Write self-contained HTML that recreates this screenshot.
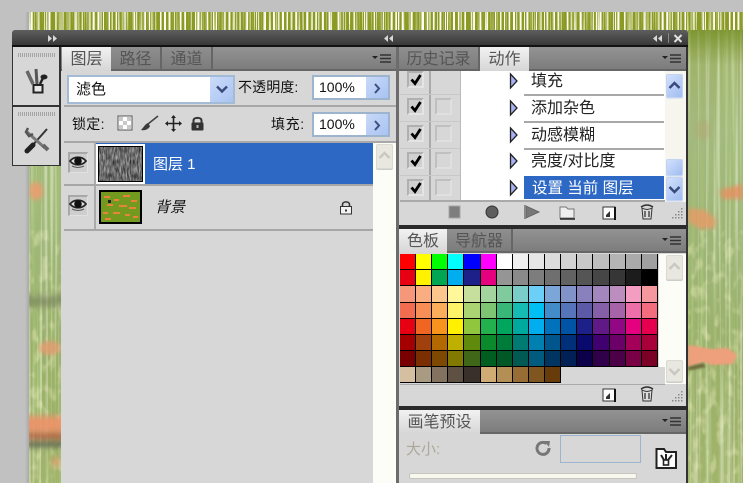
<!DOCTYPE html>
<html><head><meta charset="utf-8"><style>
*{box-sizing:border-box}
html,body{margin:0;padding:0}
body{width:743px;height:483px;overflow:hidden;position:relative;background:#c1c1c1;font-family:"Liberation Sans","Noto Sans CJK SC",sans-serif;font-size:14px;color:#111}
.a{position:absolute}
.t{position:absolute;white-space:nowrap;line-height:1}
.tabbar{position:absolute;background:linear-gradient(#939393,#7d7d7d);border-bottom:2px solid #666}
.tab{position:absolute;top:0;height:22px;text-align:center;font-size:16px;line-height:25px;color:#5c5c5c}
.tab.on{background:linear-gradient(#f2f2f2,#d6d6d6);color:#555;height:24px;z-index:2}
.tab.off{background:linear-gradient(#8f8f8f,#7c7c7c);border-right:2px solid #666;color:#555;height:22px}
.menu{position:absolute;width:20px;height:11px}
.inp{position:absolute;background:#fff;border:2px solid #9db4cf;font-size:14px;line-height:21px;padding-left:5px;color:#111}
.inp i{position:absolute;right:0;top:0;bottom:0;width:22px;background:linear-gradient(135deg,#c9d9f8,#a8c3f2)}
.inp svg{position:absolute;right:7px;top:6px}
.eye{position:absolute;left:68px;width:20px;height:21px;background:#cecece;border-left:2px solid #a8a8a8;border-top:2px solid #a8a8a8;border-right:1px solid #e0e0e0;border-bottom:1px solid #e0e0e0}
.cb{position:absolute;width:17px;height:17px;border:2px solid #b0b0b0;border-right-color:#e4e4e4;border-bottom-color:#e4e4e4;background:#d0d0d0}
.cb2{position:absolute;width:17px;height:17px;border:2px solid #c0c0c0;border-right-color:#e0e0e0;border-bottom-color:#e0e0e0;left:435px}
.act{position:absolute;left:531px;font-size:16px;line-height:1;white-space:nowrap;color:#222}
.ln{position:absolute;left:524px;width:140px;height:2px;background:#a8a8a8}
.sbb{position:absolute;width:17px;height:24px;border-radius:2px;background:linear-gradient(135deg,#d3e0fb,#9fbdf2);border:1px solid #c3d3f2;box-shadow:0 1px 0 #dfe6f0}
.sbg{position:absolute;width:17px;height:24px;border-radius:2px;background:#e8e8e0;border:1px solid #dadad2;box-shadow:0 1px 0 #ccc}
.sw{position:absolute;left:400px;top:254px;width:258px;height:130px}
.sw div{display:flex;height:16px;background:#000}
.sw div.r17{height:17px}
.sw div.last{background:none}
.sw b{display:block;flex:none;width:16px;height:100%;border-right:1px solid #000;border-bottom:1px solid #000}
.sw b:nth-child(5),.sw b:nth-child(13){width:17px}
</style></head><body>

<!-- photo background -->
<svg class="a" style="left:0;top:0" width="743" height="483">
<defs>
<clipPath id="photo"><rect x="29" y="12" width="714" height="471"/></clipPath>
<linearGradient id="bg" x1="0" y1="0" x2="0" y2="1">
<stop offset="0" stop-color="#8fa23a"/><stop offset=".08" stop-color="#a0b268"/><stop offset=".25" stop-color="#a4b97f"/><stop offset=".5" stop-color="#9db476"/><stop offset=".75" stop-color="#9ab068"/><stop offset="1" stop-color="#a2b36c"/>
</linearGradient>
<linearGradient id="edge" x1="0" y1="0" x2="1" y2="0"><stop offset="0" stop-color="#c1c1c1"/><stop offset="1" stop-color="#a9a9a9"/></linearGradient>
<filter id="b3"><feGaussianBlur stdDeviation="3"/></filter>
<filter id="b2"><feGaussianBlur stdDeviation="2"/></filter>
<filter id="b1"><feGaussianBlur stdDeviation="1"/></filter>
<filter id="streakW" x="0" y="0" width="100%" height="100%"><feTurbulence type="fractalNoise" baseFrequency="0.35 0.003" numOctaves="2" seed="7"/><feColorMatrix values="0 0 0 0 1  0 0 0 0 1  0 0 0 0 .93  5 0 0 0 -2.500"/></filter>
<filter id="streakG" x="0" y="0" width="100%" height="100%"><feTurbulence type="fractalNoise" baseFrequency="0.22 0.004" numOctaves="2" seed="21"/><feColorMatrix values="0 0 0 0 .38  0 0 0 0 .55  0 0 0 0 .18  5 0 0 0 -2.300"/></filter>
<filter id="speck" x="0" y="0" width="100%" height="100%"><feTurbulence type="fractalNoise" baseFrequency="0.12 0.07" numOctaves="2" seed="4"/><feColorMatrix values="0 0 0 0 .85  0 0 0 0 .85  0 0 0 0 .5  4 0 0 0 -2"/></filter>
<filter id="stripTop" x="0" y="0" width="100%" height="100%"><feTurbulence type="fractalNoise" baseFrequency="0.45 0.002" numOctaves="2" seed="12"/><feColorMatrix values="0 0 0 0 1  0 0 0 0 1  0 0 0 0 .92  9 0 0 0 -4.300"/></filter>
<filter id="noiseGray" x="0" y="0" width="100%" height="100%" color-interpolation-filters="sRGB"><feTurbulence type="fractalNoise" baseFrequency="0.7 0.15" numOctaves="2" seed="3"/><feColorMatrix values=".8 0 0 0 .02  .8 0 0 0 .02  .8 0 0 0 .02  0 0 0 0 1"/></filter>
<linearGradient id="fade" x1="0" y1="0" x2="0" y2="1"><stop offset="0" stop-color="#76902a" stop-opacity=".75"/><stop offset="1" stop-color="#76902a" stop-opacity="0"/></linearGradient>
</defs>
<rect x="25" y="12" width="4" height="471" fill="url(#edge)"/>
<rect x="29" y="12" width="714" height="471" fill="url(#bg)"/>
<rect x="29" y="12" width="714" height="471" filter="url(#streakG)" opacity=".6"/>
<rect x="29" y="230" width="714" height="253" filter="url(#speck)" opacity=".4"/>
<rect x="29" y="12" width="714" height="471" filter="url(#streakW)" opacity=".38"/>
<g clip-path="url(#photo)">
<g filter="url(#b2)">
<path d="M688 208L705 210L716 219L715 228L700 229L688 222Z" fill="#e89a66" opacity=".8"/>
<path d="M720 190L743 184V199L722 199Z" fill="#e88d5f" opacity=".8"/>
<ellipse cx="703" cy="130" rx="8" ry="10" fill="#b5a36f" opacity=".4"/>
<ellipse cx="36" cy="191" rx="7" ry="9" fill="#ea9d70" opacity=".9"/>
<ellipse cx="50" cy="348" rx="11" ry="7" fill="#e79a70" opacity=".8"/>
</g>
<g filter="url(#b3)">
<rect x="20" y="416" width="48" height="16" fill="#ea9468" opacity=".95"/>
<rect x="20" y="433" width="48" height="6" fill="#b4563f" opacity=".9"/>
<rect x="20" y="442" width="48" height="5" fill="#4f5548" opacity=".9"/>
<rect x="20" y="295" width="48" height="12" fill="#77805c" opacity=".6"/>
<ellipse cx="56" cy="462" rx="4" ry="5" fill="#e59565" opacity=".8"/>
</g>
<path d="M688 345L712 349L728 348L737 355L733 364L712 365L703 362L692 366L688 367Z" fill="#ee9f7c" filter="url(#b1)"/>
<path d="M688 367L703 363L706 367L692 370L688 370Z" fill="#6e6a3c" filter="url(#b1)"/>
</g>
<!-- top strip -->
<rect x="29" y="12" width="714" height="18" fill="#8b9a24"/>
<rect x="29" y="12" width="714" height="18" filter="url(#stripTop)"/>
<rect x="688" y="30" width="55" height="35" fill="url(#fade)"/>
</svg>

<!-- title bar -->
<div class="a" style="left:12px;top:30px;width:676px;height:17px;background:linear-gradient(#5e5e5e,#383838);border-bottom:2px solid #111;border-radius:3px 3px 0 0"></div>
<svg class="a" style="left:47px;top:34px" width="12" height="9"><path d="M1 1L5 4.500L1 8ZM6 1L10 4.500L6 8Z" fill="#d8d8d8"/></svg>
<svg class="a" style="left:383px;top:34px" width="12" height="9"><path d="M5 1L1 4.500L5 8ZM10 1L6 4.500L10 8Z" fill="#d8d8d8"/></svg>
<svg class="a" style="left:652px;top:34px" width="12" height="9"><path d="M5 1L1 4.500L5 8ZM10 1L6 4.500L10 8Z" fill="#d8d8d8"/></svg>
<div class="a" style="left:668px;top:33px;width:1px;height:10px;background:#888"></div>
<svg class="a" style="left:673px;top:34px" width="10" height="9"><path d="M1.500 1L8.500 8M8.500 1L1.500 8" stroke="#e0e0e0" stroke-width="2"/></svg>

<!-- dock -->
<div class="a" style="left:12px;top:47px;width:49px;height:119px;background:#d7d7d7;border:1px solid #333;border-top:0;border-right:2px solid #333"></div>
<div class="a" style="left:13px;top:105px;width:47px;height:2px;background:#333"></div>
<div class="a" style="left:18px;top:53px;width:37px;height:4px;background:repeating-linear-gradient(90deg,#a5a5a5 0 1px,transparent 1px 2px)"></div>
<div class="a" style="left:18px;top:112px;width:37px;height:4px;background:repeating-linear-gradient(90deg,#a5a5a5 0 1px,transparent 1px 2px)"></div>
<svg class="a" style="left:24px;top:66px" width="26" height="28"><path d="M3 5L9 18" stroke="#666" stroke-width="3.500"/><path d="M12 3L13 18" stroke="#555" stroke-width="3"/><path d="M16 18L19 12" stroke="#222" stroke-width="2.500"/><ellipse cx="20" cy="11" rx="3.500" ry="2.500" fill="#222"/><path d="M9.500 19H18.500V26.500H9.500Z" fill="#e8e8e8" stroke="#222" stroke-width="2"/></svg>
<svg class="a" style="left:24px;top:127px" width="28" height="28"><path d="M23 2L8 19" stroke="#333" stroke-width="2"/><path d="M9 18L3 24" stroke="#222" stroke-width="5" stroke-linecap="round"/><path d="M3 5L21 21" stroke="#777" stroke-width="3"/><path d="M4 1L2 5L5 9L9 7" fill="none" stroke="#555" stroke-width="2.500"/><path d="M19 18L24 23" stroke="#666" stroke-width="4"/></svg>

<!-- layers panel -->
<div class="a" style="left:61px;top:47px;width:337px;height:436px;background:#d7d7d7"></div>
<div class="tabbar" style="left:61px;top:47px;width:336px;height:24px">
 <div class="tab on" style="left:1px;width:49px">图层</div>
 <div class="tab off" style="left:50px;width:51px">路径</div>
 <div class="tab off" style="left:101px;width:51px">通道</div>
</div>
<svg class="menu" style="left:372px;top:54px"><path d="M0 2L6 2L3 5Z" fill="#222"/><path d="M8 1H19M8 4.500H19M8 8H19" stroke="#333" stroke-width="1.400"/></svg>

<!-- blend mode -->
<div class="a" style="left:67px;top:75px;width:168px;height:29px;background:#fff;border:2px solid #a3bbd6"></div>
<div class="a" style="left:210px;top:77px;width:23px;height:25px;background:linear-gradient(135deg,#cbdbf9,#a9c4f3)"></div>
<svg class="a" style="left:215px;top:85px" width="14" height="9"><path d="M2 1.500L7 6.500L12 1.500" stroke="#3a4a7a" stroke-width="2.400" fill="none"/></svg>
<div class="t" style="left:76px;top:82px;font-size:15px">滤色</div>
<div class="t" style="left:238px;top:80px;font-size:14px;letter-spacing:.1px">不透明度:</div>
<div class="inp" style="left:312px;top:75px;width:78px;height:25px">100%<i></i><svg width="8" height="11"><path d="M2 1L6 5.500L2 10" stroke="#3f4f80" stroke-width="2" fill="none"/></svg></div>
<div class="a" style="left:64px;top:105px;width:333px;height:2px;background:#a8a8a8"></div>
<div class="t" style="left:72px;top:117px;font-size:14px;letter-spacing:.3px">锁定:</div>
<svg class="a" style="left:117px;top:115px" width="17" height="17"><rect x="1" y="1" width="14" height="14" fill="#fff" stroke="#555" stroke-width="1"/><path d="M2 2H6V6H2ZM10 2H14V6H10ZM6 6H10V10H6ZM2 10H6V14H2ZM10 10H14V14H10Z" fill="#c8c8c8"/></svg>
<svg class="a" style="left:140px;top:115px" width="19" height="18"><path d="M18 1L8 9" stroke="#444" stroke-width="1.600"/><path d="M8 8C5 9 4 12 1 15C5 16 9 14 10 11Z" fill="#3a3a3a"/></svg>
<svg class="a" style="left:165px;top:115px" width="17" height="17"><path d="M8.500 1V16M1 8.500H16" stroke="#222" stroke-width="1.600"/><path d="M8.500 0L11 3H6ZM8.500 17L11 14H6ZM0 8.500L3 6V11ZM17 8.500L14 6V11Z" fill="#222"/></svg>
<svg class="a" style="left:190px;top:115px" width="15" height="17"><path d="M3.500 8V5.500C3.500 2 11.500 2 11.500 5.500V8" stroke="#333" stroke-width="2" fill="none"/><rect x="1.500" y="7.500" width="12" height="8" rx="1" fill="#333"/><rect x="6.500" y="10" width="2" height="3" fill="#bbb"/></svg>
<div class="t" style="left:271px;top:117px;font-size:14px;letter-spacing:.6px">填充:</div>
<div class="inp" style="left:312px;top:112px;width:78px;height:25px">100%<i></i><svg width="8" height="11"><path d="M2 1L6 5.500L2 10" stroke="#3f4f80" stroke-width="2" fill="none"/></svg></div>
<div class="a" style="left:64px;top:141px;width:333px;height:2px;background:#a8a8a8"></div>

<!-- layer rows -->
<div class="a" style="left:94px;top:143px;width:2px;height:86px;background:#aaa"></div>
<div class="a" style="left:96px;top:143px;width:277px;height:41px;background:#2d68c4"></div>
<div class="a" style="left:64px;top:184px;width:309px;height:2px;background:#a6a6a6"></div>
<div class="a" style="left:64px;top:229px;width:309px;height:2px;background:#a6a6a6"></div>
<div class="a" style="left:96px;top:144px;width:49px;height:40px;background:#000;border:2px solid #fff"></div>
<svg class="a" style="left:99px;top:147px" width="43" height="34"><rect width="43" height="34" filter="url(#noiseGray)"/></svg>
<svg class="a" style="left:99px;top:190px" width="43" height="34"><rect width="43" height="34" fill="#000"/><rect x="2" y="2" width="39" height="30" fill="#73991f"/><g fill="#e8843a"><rect x="5" y="6" width="6" height="2"/><rect x="15" y="9" width="5" height="2"/><rect x="24" y="5" width="7" height="2"/><rect x="32" y="10" width="6" height="2"/><rect x="8" y="14" width="6" height="2"/><rect x="20" y="15" width="8" height="2"/><rect x="30" y="17" width="7" height="2"/><rect x="4" y="22" width="5" height="2"/><rect x="14" y="22" width="7" height="2"/><rect x="26" y="24" width="5" height="2"/><rect x="6" y="28" width="6" height="2"/><rect x="34" y="26" width="5" height="2"/></g><rect x="9" y="10" width="3" height="3" fill="#222"/></svg>
<div class="eye" style="top:152px"></div>
<div class="eye" style="top:195px"></div>
<svg class="a" style="left:69px;top:155px" width="18" height="14"><path d="M1 6C5 1 13 1 17 6C13 11 5 11 1 6Z" fill="#ddd" stroke="#222" stroke-width="1.800"/><circle cx="9" cy="6" r="3.800" fill="#111"/><path d="M3 11C7 13 11 13 15 11" stroke="#555" fill="none"/></svg>
<svg class="a" style="left:69px;top:198px" width="18" height="14"><path d="M1 6C5 1 13 1 17 6C13 11 5 11 1 6Z" fill="#ddd" stroke="#222" stroke-width="1.800"/><circle cx="9" cy="6" r="3.800" fill="#111"/><path d="M3 11C7 13 11 13 15 11" stroke="#555" fill="none"/></svg>
<div class="t" style="left:153px;top:157px;font-size:15px;color:#fff">图层 1</div>
<div class="t" style="left:155px;top:200px;font-size:15px;font-style:italic;color:#111">背景</div>
<svg class="a" style="left:339px;top:200px" width="14" height="15"><path d="M3.500 7V4.500C3.500 1 10.500 1 10.500 4.500V7" stroke="#333" stroke-width="1.600" fill="none"/><rect x="1.500" y="6.500" width="11" height="7.500" fill="#f2f2f2" stroke="#333"/><rect x="6" y="9.500" width="2" height="2" fill="#333"/></svg>
<div class="a" style="left:373px;top:143px;width:23px;height:340px;background:#fdfdf8"></div>
<div class="sbg" style="left:376px;top:144px;height:25px"></div>
<svg class="a" style="left:378px;top:151px" width="13" height="9"><path d="M1.500 7L6.500 2L11.500 7" stroke="#c9c9c1" stroke-width="2.500" fill="none"/></svg>
<div class="a" style="left:396px;top:47px;width:3px;height:436px;background:#6c6c6c"></div>

<!-- actions panel -->
<div class="a" style="left:399px;top:47px;width:287px;height:178px;background:#d7d7d7"></div>
<div class="tabbar" style="left:399px;top:47px;width:287px;height:24px">
 <div class="tab off" style="left:0;width:81px">历史记录</div>
 <div class="tab on" style="left:81px;width:49px">动作</div>
</div>
<svg class="menu" style="left:662px;top:54px"><path d="M0 2L6 2L3 5Z" fill="#222"/><path d="M8 1H19M8 4.500H19M8 8H19" stroke="#333" stroke-width="1.400"/></svg>
<div class="a" style="left:461px;top:71px;width:204px;height:129px;background:#fff"></div>
<div class="a" style="left:429px;top:71px;width:2px;height:129px;background:#aaa"></div>
<div class="a" style="left:460px;top:71px;width:1px;height:129px;background:#bbb"></div>
<div class="a" style="left:400px;top:94px;width:60px;height:1px;background:#c8c8c8"></div>
<div class="a" style="left:400px;top:121px;width:60px;height:1px;background:#c8c8c8"></div>
<div class="a" style="left:400px;top:148px;width:60px;height:1px;background:#c8c8c8"></div>
<div class="a" style="left:400px;top:175px;width:60px;height:1px;background:#c8c8c8"></div>
<div class="a" style="left:400px;top:200px;width:265px;height:2px;background:#aaa"></div>
<div class="cb" style="left:407px;top:71px;height:17px"></div>
<div class="cb" style="left:407px;top:98px"></div>
<div class="cb" style="left:407px;top:125px"></div>
<div class="cb" style="left:407px;top:152px"></div>
<div class="cb" style="left:407px;top:179px"></div>
<div class="cb2" style="top:98px"></div>
<div class="cb2" style="top:125px"></div>
<div class="cb2" style="top:152px"></div>
<div class="cb2" style="top:179px"></div>
<svg class="a" style="left:407px;top:71px" width="18" height="129" fill="none" stroke="#000" stroke-width="2.800"><path d="M4.500 8.500L8 12.500L13.500 4"/><path d="M4.500 35.500L8 39.500L13.500 31"/><path d="M4.500 62.500L8 66.500L13.500 58"/><path d="M4.500 89.500L8 93.500L13.500 85"/><path d="M4.500 116.500L8 120.500L13.500 112"/></svg>
<svg class="a" style="left:509px;top:71px" width="10" height="129"><g fill="#a8b2f2" stroke="#222" stroke-width="1.300"><path d="M1.500 3L8 10L1.500 17Z"/><path d="M1.500 30L8 37L1.500 44Z"/><path d="M1.500 57L8 64L1.500 71Z"/><path d="M1.500 83L8 90L1.500 97Z"/><path d="M1.500 110L8 117L1.500 124Z"/></g></svg>
<div class="act" style="top:74px">填充</div>
<div class="ln" style="top:94px"></div>
<div class="act" style="top:101px">添加杂色</div>
<div class="ln" style="top:121px"></div>
<div class="act" style="top:128px">动感模糊</div>
<div class="ln" style="top:148px"></div>
<div class="act" style="top:154px">亮度/对比度</div>
<div class="a" style="left:524px;top:176px;width:140px;height:23px;background:#2d68c4"></div>
<div class="act" style="top:181px;left:532px;color:#fff;font-size:15.500px">设置 当前 图层</div>
<div class="a" style="left:665px;top:71px;width:21px;height:131px;background:#f6f6ee"></div>
<div class="sbb" style="left:666px;top:74px"></div>
<svg class="a" style="left:668px;top:81px" width="13" height="9"><path d="M1.500 7L6.500 2L11.500 7" stroke="#3a4a7a" stroke-width="2.500" fill="none"/></svg>
<div class="sbb" style="left:666px;top:159px;height:17px"></div>
<div class="sbb" style="left:666px;top:177px"></div>
<svg class="a" style="left:668px;top:185px" width="13" height="9"><path d="M1.500 2L6.500 7L11.500 2" stroke="#3a4a7a" stroke-width="2.500" fill="none"/></svg>
<!-- action footer -->
<svg class="a" style="left:445px;top:203px" width="240" height="20">
<rect x="4" y="3" width="11" height="12" fill="#7e7e7e" stroke="#a5a5a5"/>
<circle cx="47" cy="9" r="6" fill="#5e5e5e" stroke="#333"/>
<path d="M81 3L81 15L94 9Z" fill="#777" stroke="#666"/><path d="M80 2V16" stroke="#888" stroke-width="2"/>
<path d="M115 4H121L123 6H129V15H115Z" fill="#eee" stroke="#777"/><path d="M115 16H130" stroke="#222" stroke-width="1.500"/>
<path d="M158 4H170V16H158Z" fill="#fff" stroke="#333"/><path d="M161 12L165 8V14H161Z" fill="#333"/><path d="M170 4V17" stroke="#111" stroke-width="2"/>
<path d="M197 5Q202 8 207 5L206 16H198Z" fill="#ddd" stroke="#333"/><path d="M196 4Q202 0 208 4" stroke="#333" stroke-width="1.500" fill="none"/><path d="M200 8V14M204 8V14" stroke="#333" stroke-width="1.300"/>
</svg>
<svg class="a" style="left:669px;top:207px" width="15" height="15" fill="#888"><rect x="12" y="1" width="1.500" height="1.500"/><rect x="9" y="4" width="1.500" height="1.500"/><rect x="12" y="4" width="1.500" height="1.500"/><rect x="6" y="7" width="1.500" height="1.500"/><rect x="9" y="7" width="1.500" height="1.500"/><rect x="12" y="7" width="1.500" height="1.500"/><rect x="3" y="10" width="1.500" height="1.500"/><rect x="6" y="10" width="1.500" height="1.500"/><rect x="9" y="10" width="1.500" height="1.500"/><rect x="12" y="10" width="1.500" height="1.500"/></svg>
<div class="a" style="left:399px;top:225px;width:289px;height:4px;background:#2a2a2a"></div>
<div class="a" style="left:686px;top:47px;width:2px;height:436px;background:#333"></div>

<!-- swatches -->
<div class="a" style="left:399px;top:229px;width:287px;height:177px;background:#d7d7d7"></div>
<div class="tabbar" style="left:399px;top:229px;width:287px;height:24px">
 <div class="tab on" style="left:0;width:48px">色板</div>
 <div class="tab off" style="left:48px;width:66px">导航器</div>
</div>
<svg class="menu" style="left:662px;top:236px"><path d="M0 2L6 2L3 5Z" fill="#222"/><path d="M8 1H19M8 4.500H19M8 8H19" stroke="#333" stroke-width="1.400"/></svg>
<div class="a" style="left:659px;top:254px;width:27px;height:113px;background:#fdfdf8"></div>
<div class="a" style="left:665px;top:367px;width:21px;height:17px;background:#fdfdf8"></div>
<div class="sw">
<div><b style="background:#ff0000"></b><b style="background:#ffff00"></b><b style="background:#00ff00"></b><b style="background:#00ffff"></b><b style="background:#0000ff"></b><b style="background:#ff00ff"></b><b style="background:#ffffff"></b><b style="background:#f0f0f0"></b><b style="background:#e6e6e6"></b><b style="background:#dcdcdc"></b><b style="background:#d2d2d2"></b><b style="background:#c8c8c8"></b><b style="background:#bebebe"></b><b style="background:#b4b4b4"></b><b style="background:#aaaaaa"></b><b style="background:#a0a0a0"></b></div>
<div><b style="background:#e60012"></b><b style="background:#fff200"></b><b style="background:#00a651"></b><b style="background:#00aeef"></b><b style="background:#1d2088"></b><b style="background:#e4007f"></b><b style="background:#959595"></b><b style="background:#8a8a8a"></b><b style="background:#7d7d7d"></b><b style="background:#6f6f6f"></b><b style="background:#626262"></b><b style="background:#555555"></b><b style="background:#464646"></b><b style="background:#363636"></b><b style="background:#1c1c1c"></b><b style="background:#000000"></b></div>
<div class="r17"><b style="background:#f7977a"></b><b style="background:#fbad82"></b><b style="background:#fdc68c"></b><b style="background:#fff799"></b><b style="background:#c6df9c"></b><b style="background:#a4d49d"></b><b style="background:#81ca9d"></b><b style="background:#7bcdc9"></b><b style="background:#6ccff7"></b><b style="background:#7ca6d8"></b><b style="background:#8293ca"></b><b style="background:#8881be"></b><b style="background:#a286bd"></b><b style="background:#bc8dbf"></b><b style="background:#f49cc2"></b><b style="background:#f5989d"></b></div>
<div><b style="background:#f26c4f"></b><b style="background:#f68e55"></b><b style="background:#fbaf5a"></b><b style="background:#fff467"></b><b style="background:#acd372"></b><b style="background:#7dc473"></b><b style="background:#39b778"></b><b style="background:#16bcb4"></b><b style="background:#00bff3"></b><b style="background:#438cca"></b><b style="background:#5574b9"></b><b style="background:#5c5aa7"></b><b style="background:#855fa8"></b><b style="background:#a763a8"></b><b style="background:#ee6ea9"></b><b style="background:#f26d7d"></b></div>
<div><b style="background:#e60012"></b><b style="background:#f16522"></b><b style="background:#f7941d"></b><b style="background:#fff100"></b><b style="background:#8fc63d"></b><b style="background:#22b14c"></b><b style="background:#00a65d"></b><b style="background:#00a99e"></b><b style="background:#00aeef"></b><b style="background:#0072bc"></b><b style="background:#0054a5"></b><b style="background:#1d2088"></b><b style="background:#601986"></b><b style="background:#920783"></b><b style="background:#e4007f"></b><b style="background:#e5004f"></b></div>
<div><b style="background:#a40000"></b><b style="background:#a0410d"></b><b style="background:#b26a00"></b><b style="background:#bfb000"></b><b style="background:#608a0c"></b><b style="background:#0a8a2a"></b><b style="background:#007c3a"></b><b style="background:#007b74"></b><b style="background:#0080b0"></b><b style="background:#00568c"></b><b style="background:#00307a"></b><b style="background:#0a0a6e"></b><b style="background:#400070"></b><b style="background:#6a0068"></b><b style="background:#a4005a"></b><b style="background:#a80038"></b></div>
<div><b style="background:#790000"></b><b style="background:#7b2e00"></b><b style="background:#7d4900"></b><b style="background:#827a00"></b><b style="background:#406618"></b><b style="background:#005e20"></b><b style="background:#005826"></b><b style="background:#005952"></b><b style="background:#005b7f"></b><b style="background:#003562"></b><b style="background:#002056"></b><b style="background:#0c004b"></b><b style="background:#30004a"></b><b style="background:#4b0048"></b><b style="background:#7a0045"></b><b style="background:#7a0026"></b></div>
<div class="last"><b style="background:#d4c0a0"></b><b style="background:#a99a82"></b><b style="background:#847260"></b><b style="background:#5f5044"></b><b style="background:#39302c"></b><b style="background:#d0ab74"></b><b style="background:#b48f55"></b><b style="background:#976d35"></b><b style="background:#7f5520"></b><b style="background:#673c0a"></b></div>
</div>
<div class="sbg" style="left:666px;top:255px;height:25px"></div>
<svg class="a" style="left:668px;top:262px" width="13" height="9"><path d="M1.500 7L6.500 2L11.500 7" stroke="#c9c9c1" stroke-width="2.500" fill="none"/></svg>
<div class="sbg" style="left:666px;top:360px;height:22px"></div>
<svg class="a" style="left:668px;top:367px" width="13" height="9"><path d="M1.500 2L6.500 7L11.500 2" stroke="#c9c9c1" stroke-width="2.500" fill="none"/></svg>
<div class="a" style="left:400px;top:384px;width:265px;height:1px;background:#aaa"></div>
<svg class="a" style="left:598px;top:386px" width="60" height="20">
<path d="M5 3H17V15H5Z" fill="#fff" stroke="#333"/><path d="M8 11L12 7V13H8Z" fill="#333"/><path d="M17 3V16" stroke="#111" stroke-width="2"/>
<path d="M44 4Q49 7 54 4L53 15H45Z" fill="#ddd" stroke="#333"/><path d="M43 3Q49 -1 55 3" stroke="#333" stroke-width="1.500" fill="none"/><path d="M47 7V13M51 7V13" stroke="#333" stroke-width="1.300"/>
</svg>
<svg class="a" style="left:669px;top:390px" width="15" height="15" fill="#888"><rect x="12" y="1" width="1.500" height="1.500"/><rect x="9" y="4" width="1.500" height="1.500"/><rect x="12" y="4" width="1.500" height="1.500"/><rect x="6" y="7" width="1.500" height="1.500"/><rect x="9" y="7" width="1.500" height="1.500"/><rect x="12" y="7" width="1.500" height="1.500"/><rect x="3" y="10" width="1.500" height="1.500"/><rect x="6" y="10" width="1.500" height="1.500"/><rect x="9" y="10" width="1.500" height="1.500"/><rect x="12" y="10" width="1.500" height="1.500"/></svg>
<div class="a" style="left:399px;top:406px;width:289px;height:4px;background:#2a2a2a"></div>

<!-- brush presets -->
<div class="a" style="left:399px;top:410px;width:287px;height:73px;background:#d7d7d7"></div>
<div class="tabbar" style="left:399px;top:410px;width:287px;height:24px">
 <div class="tab on" style="left:0;width:81px">画笔预设</div>
</div>
<svg class="menu" style="left:662px;top:417px"><path d="M0 2L6 2L3 5Z" fill="#222"/><path d="M8 1H19M8 4.500H19M8 8H19" stroke="#333" stroke-width="1.400"/></svg>
<div class="t" style="left:406px;top:442px;font-size:15px;color:#aca89a">大小:</div>
<svg class="a" style="left:535px;top:440px" width="17" height="17"><path d="M11.500 3.500A6 6 0 1 0 14 8" stroke="#777" stroke-width="3" fill="none"/><path d="M9 1L15 1L14 7Z" fill="#777"/></svg>
<div class="a" style="left:560px;top:435px;width:81px;height:28px;border:1px solid #9db4cf"></div>
<svg class="a" style="left:655px;top:446px" width="23" height="24"><path d="M1.500 3H9L11 6H21V22H1.500Z" fill="#fff" stroke="#222" stroke-width="2"/><path d="M6 9L9 14M11 8V14M17 9L13 14" stroke="#222" stroke-width="2"/><rect x="8.500" y="14" width="5" height="5" fill="#fff" stroke="#222" stroke-width="1.600"/></svg>
<div class="a" style="left:409px;top:473px;width:228px;height:6px;background:#f8f8ee;border:1px solid #c6c6be;border-radius:2px"></div>
</body></html>
